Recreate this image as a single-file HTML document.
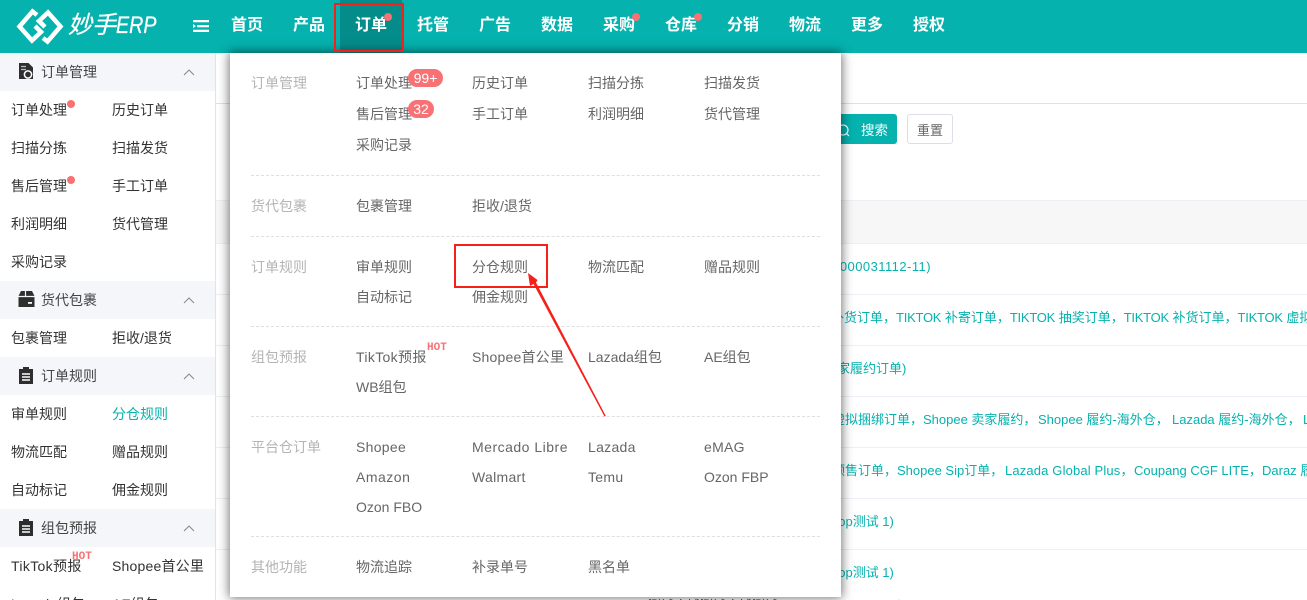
<!DOCTYPE html>
<html lang="zh"><head><meta charset="utf-8"><title>妙手ERP</title>
<style>
*{box-sizing:border-box}
html,body{margin:0;padding:0;width:1307px;height:600px;overflow:hidden;background:#fff}
body{position:relative;font:14px/20px "Liberation Sans","Noto Sans CJK SC",sans-serif;color:#333}
.a,.t,.n,.l,.d,.g,.k,.r,.c{position:absolute}
.t,.n,.l,.d,.k,.c{white-space:nowrap}
#wrap{left:0;top:0;width:1307px;height:600px;overflow:hidden}
#hd{left:0;top:0;width:1307px;height:53px;background:#05b2ae;z-index:3}
.n{top:16px;font-size:16px;font-weight:700;color:#fff;line-height:20px}
.dot{position:absolute;border-radius:50%;background:#f87174}
#side{left:0;top:53px;width:216px;height:547px;background:#fff;border-right:1px solid #e4e4ea;overflow:hidden}
.g{left:0;width:215px;height:38px;background:#f5f6fa}
.k{color:#444}
#menu{left:230px;top:53px;width:611px;height:544px;background:#fff;z-index:4;box-shadow:0 0 10px 1px rgba(0,0,0,.55)}
.l{color:#b4b4b4}
.d{color:#666}
.hr{position:absolute;left:21px;width:569px;border-top:1px dashed #dedee4;height:0}
.b{position:absolute;height:18px;border-radius:9px;background:#f87174;color:#fff;font-size:14px;line-height:18px;text-align:center}
.hot{position:absolute;font:bold 11px/10px "Liberation Mono",monospace;color:#f87174}
.r{left:216px;width:1091px;border-top:1px solid #eeeef4;height:0}
.c{color:#05b2ae;font-size:13px;top:0;transform:translateY(1px)}
.c span{letter-spacing:-.25px}
.x{letter-spacing:.35px}
</style></head><body>
<div id="wrap" class="a">

<div class="a" style="left:216px;top:103px;width:1091px;height:1px;background:#e0e0e6"></div>
<div class="a" style="left:780px;top:114px;width:117px;height:30px;background:#05b2ae;border-radius:3px"></div>
<svg class="a" style="left:830px;top:122px" width="22" height="18" fill="none" stroke="#fff" stroke-width="1.2"><circle cx="13" cy="8" r="5"/><path d="M16.500 11.500l2.500 2.500"/></svg>
<div class="t" style="left:861px;top:121px;color:#fff;font-size:13.500px">搜索</div>
<div class="a" style="left:907px;top:114px;width:46px;height:30px;border:1px solid #dcdfe6;border-radius:3px"></div>
<div class="t" style="left:917px;top:121px;color:#666;font-size:13px">重置</div>
<div class="a" style="left:216px;top:200px;width:1091px;height:44px;background:#f7f7f7;border-top:1px solid #eeeef4;border-bottom:1px solid #eeeef4"></div>
<div class="r" style="top:294px"></div><div class="r" style="top:345px"></div><div class="r" style="top:396px"></div><div class="r" style="top:447px"></div><div class="r" style="top:498px"></div><div class="r" style="top:549px"></div>
<div class="c" style="right:376px;top:256px;letter-spacing:.45px">000031112-11)</div>
<div class="c" style="left:831px;top:307px">补货订单，<span>TIKTOK</span> 补寄订单，<span>TIKTOK</span> 抽奖订单，<span>TIKTOK</span> 补货订单，<span>TIKTOK</span> 虚拟</div>
<div class="c" style="left:824px;top:358px">卖家履约订单)</div>
<div class="c" style="left:832px;top:409px">虚拟捆绑订单，Shopee 卖家履约，</div>
<div class="c" style="left:1038px;top:409px">Shopee 履约-海外仓，</div>
<div class="c" style="left:1172px;top:409px">Lazada 履约-海外仓，</div>
<div class="c" style="left:1303px;top:409px">L</div>
<div class="c" style="left:832px;top:460px">预售订单，</div>
<div class="c" style="left:897px;top:460px">Shopee Sip订单，</div>
<div class="c" style="left:1005px;top:460px;letter-spacing:.15px">Lazada Global Plus，</div>
<div class="c" style="left:1134px;top:460px">Coupang CGF LITE，</div>
<div class="c" style="left:1262px;top:460px">Daraz 履约</div>
<div class="c" style="left:831px;top:511px">hop测试 1)</div>
<div class="c" style="left:831px;top:562px">hop测试 1)</div>
<div class="c" style="left:877px;top:596px">店铺</div>
<div class="t" style="left:648px;top:596px;color:#333;font-size:13px">测试店铺测试店铺测试</div>

<div id="side" class="a">
<div class="g" style="top:0"></div><div class="g" style="top:228px"></div><div class="g" style="top:304px"></div><div class="g" style="top:456px"></div>
<svg class="a" style="left:19px;top:9px" width="15" height="18"><path d="M0 1h9.500l4.500 4.500V17H0z" fill="#2e2e2e"/><path d="M2 4.500h5M2 7.500h5" stroke="#bbb" stroke-width="1.300"/><circle cx="9" cy="12.500" r="3.600" fill="none" stroke="#fff" stroke-width="1.500"/><circle cx="9" cy="12.500" r="1.200" fill="#2e2e2e"/></svg>
<svg class="a" style="left:18px;top:237px" width="17" height="18"><path d="M3 1h11l2.500 5v11H.5V6z" fill="#2e2e2e"/><path d="M.5 6.500h16M7.500 1v5.500" stroke="#f5f6fa" stroke-width="1.200"/><path d="M10 12h4v1.800h-4z" fill="#fff"/></svg>
<svg class="a" style="left:19px;top:313px" width="15" height="18"><path d="M0 3h4V1h6v2h4v15H0z" fill="#2e2e2e"/><path d="M3 8h8M3 11h8M3 14h8" stroke="#fff" stroke-width="1.500"/></svg>
<svg class="a" style="left:19px;top:465px" width="15" height="18"><path d="M0 3h4V1h6v2h4v15H0z" fill="#2e2e2e"/><path d="M3 8h8M3 11h8M3 14h8" stroke="#fff" stroke-width="1.500"/></svg>
<svg class="a" style="left:183px;top:16px" width="12" height="7" fill="none" stroke="#888"><path d="M1 6l5-5 5 5"/></svg>
<svg class="a" style="left:183px;top:244px" width="12" height="7" fill="none" stroke="#888"><path d="M1 6l5-5 5 5"/></svg>
<svg class="a" style="left:183px;top:320px" width="12" height="7" fill="none" stroke="#888"><path d="M1 6l5-5 5 5"/></svg>
<svg class="a" style="left:183px;top:472px" width="12" height="7" fill="none" stroke="#888"><path d="M1 6l5-5 5 5"/></svg>
<div class="k" style="left:41px;top:9px">订单管理</div>
<div class="k" style="left:41px;top:237px">货代包裹</div>
<div class="k" style="left:41px;top:313px">订单规则</div>
<div class="k" style="left:41px;top:465px">组包预报</div>
<div class="t" style="left:11px;top:47px">订单处理</div><div class="t" style="left:112px;top:47px">历史订单</div>
<div class="dot" style="left:67px;top:47px;width:8px;height:8px"></div>
<div class="t" style="left:11px;top:85px">扫描分拣</div><div class="t" style="left:112px;top:85px">扫描发货</div>
<div class="t" style="left:11px;top:123px">售后管理</div><div class="t" style="left:112px;top:123px">手工订单</div>
<div class="dot" style="left:67px;top:123px;width:8px;height:8px"></div>
<div class="t" style="left:11px;top:161px">利润明细</div><div class="t" style="left:112px;top:161px">货代管理</div>
<div class="t" style="left:11px;top:199px">采购记录</div>
<div class="t" style="left:11px;top:275px">包裹管理</div><div class="t" style="left:112px;top:275px">拒收/退货</div>
<div class="t" style="left:11px;top:351px">审单规则</div><div class="t" style="left:112px;top:351px;color:#05b2ae">分仓规则</div>
<div class="t" style="left:11px;top:389px">物流匹配</div><div class="t" style="left:112px;top:389px">赠品规则</div>
<div class="t" style="left:11px;top:427px">自动标记</div><div class="t" style="left:112px;top:427px">佣金规则</div>
<div class="t x" style="left:11px;top:503px">TikTok预报</div><div class="t" style="left:112px;top:503px;letter-spacing:.2px">Shopee首公里</div>
<div class="hot" style="left:72px;top:499px">HOT</div>
<div class="t" style="left:11px;top:541px">Lazada组包</div><div class="t" style="left:112px;top:541px">AE组包</div>
</div>

<div id="menu" class="a">
<div class="l" style="left:21px;top:20px">订单管理</div>
<div class="d" style="left:126px;top:20px">订单处理</div><div class="d" style="left:242px;top:20px">历史订单</div><div class="d" style="left:358px;top:20px">扫描分拣</div><div class="d" style="left:474px;top:20px">扫描发货</div>
<div class="b" style="left:178px;top:16px;width:35px">99+</div>
<div class="d" style="left:126px;top:51px">售后管理</div><div class="d" style="left:242px;top:51px">手工订单</div><div class="d" style="left:358px;top:51px">利润明细</div><div class="d" style="left:474px;top:51px">货代管理</div>
<div class="b" style="left:178px;top:47px;width:26px">32</div>
<div class="d" style="left:126px;top:82px">采购记录</div>
<div class="hr" style="top:122px"></div>
<div class="l" style="left:21px;top:143px">货代包裹</div>
<div class="d" style="left:126px;top:143px">包裹管理</div><div class="d" style="left:242px;top:143px">拒收/退货</div>
<div class="hr" style="top:183px"></div>
<div class="l" style="left:21px;top:204px">订单规则</div>
<div class="d" style="left:126px;top:204px">审单规则</div><div class="d" style="left:242px;top:204px">分仓规则</div><div class="d" style="left:358px;top:204px">物流匹配</div><div class="d" style="left:474px;top:204px">赠品规则</div>
<div class="d" style="left:126px;top:234px">自动标记</div><div class="d" style="left:242px;top:234px">佣金规则</div>
<div class="hr" style="top:273px"></div>
<div class="l" style="left:21px;top:294px">组包预报</div>
<div class="d x" style="left:126px;top:294px">TikTok预报</div><div class="d" style="left:242px;top:294px;letter-spacing:.2px">Shopee首公里</div><div class="d" style="left:358px;top:294px">Lazada组包</div><div class="d" style="left:474px;top:294px">AE组包</div>
<div class="hot" style="left:197px;top:290px">HOT</div>
<div class="d" style="left:126px;top:324px">WB组包</div>
<div class="hr" style="top:363px"></div>
<div class="l" style="left:21px;top:384px">平台仓订单</div>
<div class="d" style="left:126px;top:384px;letter-spacing:.3px">Shopee</div><div class="d" style="left:242px;top:384px;letter-spacing:.5px">Mercado Libre</div><div class="d" style="left:358px;top:384px;letter-spacing:.3px">Lazada</div><div class="d" style="left:474px;top:384px;letter-spacing:.3px">eMAG</div>
<div class="d" style="left:126px;top:414px;letter-spacing:.5px">Amazon</div><div class="d" style="left:242px;top:414px;letter-spacing:.3px">Walmart</div><div class="d" style="left:358px;top:414px;letter-spacing:.3px">Temu</div><div class="d" style="left:474px;top:414px">Ozon FBP</div>
<div class="d" style="left:126px;top:444px">Ozon FBO</div>
<div class="hr" style="top:483px"></div>
<div class="l" style="left:21px;top:504px">其他功能</div>
<div class="d" style="left:126px;top:504px">物流追踪</div><div class="d" style="left:242px;top:504px">补录单号</div><div class="d" style="left:358px;top:504px">黑名单</div>
</div>

<div id="hd" class="a">
<svg class="a" style="left:15px;top:7px" width="50" height="38" fill="none" stroke="#fff" stroke-width="4.500"><path d="M22 8L17.500 4.500 4.500 19.500 17 33.500 26 25 20 19"/><path d="M28 31L32.500 34.500 45.500 19.500 33 5.500 24 14 30 20"/></svg>
<div class="t" style="left:68px;top:11px;font-size:24px;line-height:30px;color:#fff;font-style:italic;-webkit-text-stroke:.3px #fff">妙手<span style="display:inline-block;transform:scaleX(.82);transform-origin:0 50%">ERP</span></div>
<svg class="a" style="left:193px;top:20px" width="16" height="12" fill="#fff"><path d="M0 0h16v2.200H0zM4 5h12v2.200H4zM0 9.800h16V12H0zM0 4l3 2.100-3 2.100z"/></svg>
<div class="a" style="left:340px;top:0;width:62px;height:53px;background:#048c8a"></div>
<div class="n" style="left:231px">首页</div><div class="n" style="left:293px">产品</div><div class="n" style="left:355px">订单</div><div class="n" style="left:417px">托管</div><div class="n" style="left:479px">广告</div><div class="n" style="left:541px">数据</div><div class="n" style="left:603px">采购</div><div class="n" style="left:665px">仓库</div><div class="n" style="left:727px">分销</div><div class="n" style="left:789px">物流</div><div class="n" style="left:851px">更多</div><div class="n" style="left:913px">授权</div>
<div class="dot" style="left:384px;top:13px;width:8px;height:8px"></div>
<div class="dot" style="left:632px;top:13px;width:8px;height:8px"></div>
<div class="dot" style="left:694px;top:13px;width:8px;height:8px"></div>
</div>

<div class="a" style="left:334px;top:3px;width:70px;height:49px;border:2px solid #f5201a;z-index:6"></div>
<div class="a" style="left:454px;top:244px;width:94px;height:44px;border:2px solid #f5201a;z-index:6"></div>
<svg class="a" style="left:520px;top:265px;z-index:6" width="95" height="155"><path d="M8 8L10 21 13.500 19 84.500 151.500 85.800 151 16 17.500 17.500 15z" fill="#f5201a"/></svg>
</div>
</body></html>
